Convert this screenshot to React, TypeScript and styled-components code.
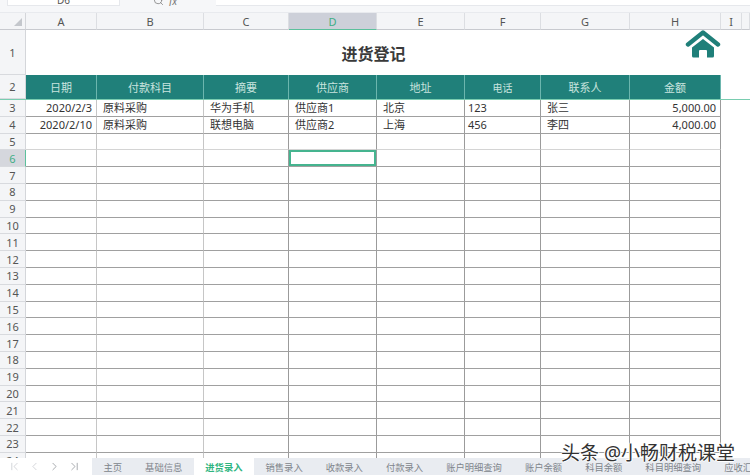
import styled, { createGlobalStyle } from "styled-components";
import { ChevronFirst, ChevronLast, ChevronLeft, ChevronRight, Search } from "lucide-react";

const COLS = "26px 71px 107px 85px 88px 88px 76px 89px 91px 21px 8px";
const LETTERS = ["A", "B", "C", "D", "E", "F", "G", "H", "I", ""];
const HEADINGS = ["日期", "付款科目", "摘要", "供应商", "地址", "电话", "联系人", "金额"];
const SHEETS = ["主页", "基础信息", "进货录入", "销售录入", "收款录入", "付款录入", "账户明细查询", "账户余额", "科目余额", "科目明细查询", "应收汇总表"];
const DATA: Record<number, string[]> = {
  3: ["2020/2/3", "原料采购", "华为手机", "供应商1", "北京", "123", "张三", "5,000.00"],
  4: ["2020/2/10", "原料采购", "联想电脑", "供应商2", "上海", "456", "李四", "4,000.00"],
};
const ROW_NUMBERS = Array.from({ length: 22 }, (_, i) => i + 3);

const GlobalStyle = createGlobalStyle`
  html, body { margin: 0; padding: 0; background: #fff; }
  body { font-family: "Noto Sans", "Noto Sans CJK SC", sans-serif; }
  * { box-sizing: border-box; }
`;

const Page = styled.div`
  position: relative;
  width: 750px;
  height: 475px;
  display: flex;
  flex-direction: column;
  overflow: hidden;
  background: #fff;
`;

const FormulaBar = styled.div`
  height: 13px;
  flex: none;
  display: flex;
  gap: 33px;
  padding: 0 0 6px 7px;
  background: #f6f7f9;
  border-bottom: 1px solid #e8eaee;
`;

const NameBox = styled.div`
  width: 113px;
  background: #fff;
  border: 1px solid #e6e8ec;
  border-top: 0;
  display: flex;
  justify-content: center;
  align-items: flex-end;
  font-size: 10px;
  line-height: 10px;
  color: #555;
  overflow: hidden;
`;

const FxTools = styled.div`
  display: flex;
  align-items: flex-end;
  gap: 5px;
  width: 30px;
  color: #777;
  font-size: 10px;
  line-height: 10px;
  font-style: italic;
  overflow: hidden;
`;

const FormulaInput = styled.div`
  flex: 1;
  background: #fff;
  border-bottom: 1px solid #e6e8ec;
`;

const Sheet = styled.div`
  flex: 1;
  min-height: 0;
  overflow: hidden;
`;

const Row = styled.div<{ $height: number }>`
  display: grid;
  grid-template-columns: ${COLS};
  height: ${(p) => p.$height}px;
`;

const Corner = styled.div`
  background: #f4f5f7;
  border-right: 1px solid #d4d6da;
  border-bottom: 1px solid #c8cacf;
  position: relative;
  &::after {
    content: "";
    position: absolute;
    left: 14px;
    top: 5px;
    width: 8px;
    height: 8px;
    background: #c4c7cc;
    clip-path: polygon(100% 0, 100% 100%, 0 100%);
  }
`;

const ColumnHead = styled.div<{ $active?: boolean }>`
  display: flex;
  align-items: center;
  justify-content: center;
  font-size: 11px;
  color: ${(p) => (p.$active ? "#3fae86" : "#555")};
  background: ${(p) => (p.$active ? "#cdd0d9" : "#f4f5f7")};
  border-right: 1px solid #dcdee2;
  border-bottom: ${(p) => (p.$active ? "1px solid #5cc09c" : "1px solid #c8cacf")};
`;

const RowHead = styled.div<{ $active?: boolean }>`
  display: flex;
  align-items: center;
  justify-content: center;
  font-size: 11px;
  color: ${(p) => (p.$active ? "#3fae86" : "#555")};
  background: ${(p) => (p.$active ? "#d5d7dd" : "#f4f5f7")};
  border-right: ${(p) => (p.$active ? "1px solid #5cc09c" : "1px solid #d4d6da")};
  border-bottom: 1px solid #d8dade;
`;

const TitleCell = styled.div`
  grid-column: 2 / 10;
  display: flex;
  align-items: center;
  justify-content: center;
  font-size: 16px;
  font-weight: 700;
  color: #3a3a3a;
  background: #fff;
`;

const HeadingCell = styled.div<{ $small?: boolean }>`
  display: flex;
  align-items: center;
  justify-content: center;
  font-size: ${(p) => (p.$small ? "10px" : "11px")};
  color: #c9e4df;
  background: #20807a;
  border-right: 1px solid #6cb6ae;
`;

const FreezeRow = styled(Row)`
  border-bottom: 1px solid #79cdb0;
`;

const Cell = styled.div<{ $right?: boolean; $tight?: boolean; $selected?: boolean; $soft?: boolean; $softBottom?: boolean }>`
  display: flex;
  align-items: center;
  justify-content: ${(p) => (p.$right ? "flex-end" : "flex-start")};
  padding: ${(p) => (p.$right ? "0 4px 0 0" : p.$tight ? "0 0 0 3px" : "0 0 0 6px")};
  font-size: 11px;
  line-height: 1;
  white-space: nowrap;
  color: #333;
  border-right: 1px solid ${(p) => (p.$soft ? "#c6c6c6" : "#9b9b9b")};
  border-bottom: 1px solid ${(p) => (p.$softBottom ? "#d4d4d4" : "#a0a0a0")};
  box-shadow: ${(p) => (p.$selected ? "inset 0 0 0 2px #45b48f" : "none")};
`;

const HomeLink = styled.svg`
  position: absolute;
  left: 685px;
  top: 29px;
  width: 36px;
  height: 30px;
`;

const TabBar = styled.div`
  height: 17px;
  flex: none;
  display: flex;
  background: #e9ecf1;
  overflow: hidden;
`;

const Pager = styled.div`
  width: 92px;
  flex: none;
  display: flex;
  align-items: center;
  gap: 7px;
  padding-left: 8px;
  background: #fff;
`;

const PagerIcon = styled.span<{ $dim?: boolean }>`
  display: flex;
  color: ${(p) => (p.$dim ? "#bcc0c6" : "#7c8087")};
`;

const Tab = styled.div<{ $active?: boolean }>`
  flex: none;
  padding: 0 11.5px;
  display: flex;
  align-items: center;
  font-size: 9.3px;
  white-space: nowrap;
  font-weight: ${(p) => (p.$active ? 700 : 400)};
  color: ${(p) => (p.$active ? "#2fb57f" : "#80858c")};
  background: ${(p) => (p.$active ? "#fff" : "transparent")};
`;

const Watermark = styled.div`
  position: absolute;
  left: 561px;
  top: 440px;
  font-size: 19px;
  line-height: 26px;
  white-space: nowrap;
  color: #333;
  text-shadow: 1px 0 0 #fff, -1px 0 0 #fff, 0 1px 0 #fff, 0 -1px 0 #fff;
`;

export default function App() {
  return (
    <Page>
      <GlobalStyle />
      <FormulaBar>
        <NameBox>D6</NameBox>
        <FxTools>
          <Search size={11} strokeWidth={1.6} />
          <span>fx</span>
        </FxTools>
        <FormulaInput />
      </FormulaBar>

      <Sheet>
        <Row $height={17}>
          <Corner />
          {LETTERS.map((letter, i) => (
            <ColumnHead key={i} $active={letter === "D"}>{letter}</ColumnHead>
          ))}
        </Row>

        <Row $height={45}>
          <RowHead>1</RowHead>
          <TitleCell>进货登记</TitleCell>
        </Row>

        <FreezeRow $height={25}>
          <RowHead>2</RowHead>
          {HEADINGS.map((heading) => (
            <HeadingCell key={heading} $small={heading === "电话"}>{heading}</HeadingCell>
          ))}
        </FreezeRow>

        {ROW_NUMBERS.map((n) => (
          <Row key={n} $height={16.81}>
            <RowHead $active={n === 6}>{n}</RowHead>
            {HEADINGS.map((_, c) => (
              <Cell
                key={c}
                $right={c === 0 || c === 7}
                $tight={c === 5}
                $soft={c < 2}
                $softBottom={n === 5}
                $selected={n === 6 && c === 3}
              >
                {DATA[n]?.[c]}
              </Cell>
            ))}
          </Row>
        ))}
      </Sheet>

      <TabBar>
        <Pager>
          <PagerIcon $dim><ChevronFirst size={13} strokeWidth={1.2} /></PagerIcon>
          <PagerIcon $dim><ChevronLeft size={13} strokeWidth={1.2} /></PagerIcon>
          <PagerIcon><ChevronRight size={13} strokeWidth={1.2} /></PagerIcon>
          <PagerIcon><ChevronLast size={13} strokeWidth={1.2} /></PagerIcon>
        </Pager>
        {SHEETS.map((sheet) => (
          <Tab key={sheet} $active={sheet === "进货录入"}>{sheet}</Tab>
        ))}
      </TabBar>

      <HomeLink viewBox="0 0 36 30" aria-label="home">
        <path d="M3 15.5 L18 3.5 L33 15.5" fill="none" stroke="#1f7f79" strokeWidth="4.4" strokeLinecap="round" strokeLinejoin="round" />
        <path fillRule="evenodd" fill="#1f7f79" d="M18 10 L29 18.5 V27 a1.5 1.5 0 0 1 -1.5 1.5 H8.5 A1.5 1.5 0 0 1 7 27 V18.5 Z M14 28.5 V22 a1 1 0 0 1 1 -1 h6 a1 1 0 0 1 1 1 v6.5 Z" />
      </HomeLink>
      <Watermark>头条 @小畅财税课堂</Watermark>
    </Page>
  );
}
